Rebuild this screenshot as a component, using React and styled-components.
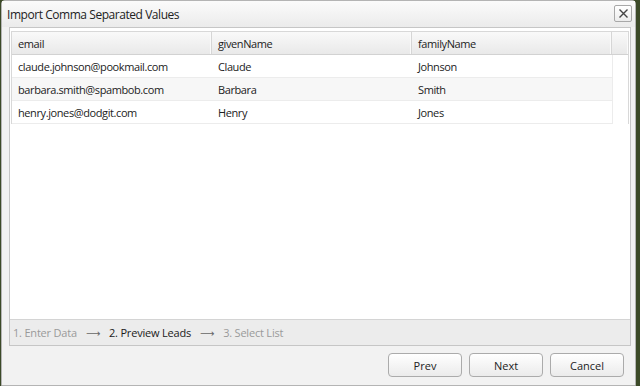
import React from 'react';
import styled, { createGlobalStyle } from 'styled-components';

const GlobalStyle = createGlobalStyle`
  html, body {
    margin: 0;
    padding: 0;
    background: #3c4a28;
    width: 640px;
    height: 386px;
    overflow: hidden;
  }
  * { box-sizing: border-box; }
`;

const Dialog = styled.div`
  margin-left: 1px;
  width: 635px;
  height: 386px;
  border: 1px solid #b4b4b4;
  border-radius: 4px 4px 0 0;
  background: #f2f2f2;
  display: flex;
  flex-direction: column;
  font-family: "Open Sans", "DejaVu Sans", sans-serif;
  color: #222;
`;

const TitleBar = styled.div`
  height: 26px;
  flex: none;
  display: flex;
  align-items: center;
  justify-content: space-between;
  padding: 0 3px 0 5px;
  background: linear-gradient(#fbfbfb, #ebebeb);
  font-size: 12px;
  letter-spacing: -0.45px;
`;

const CloseButton = styled.button`
  width: 18px;
  height: 17px;
  padding: 0;
  margin-top: -1px;
  border: 1px solid #a8a8a8;
  border-radius: 2px;
  background: linear-gradient(#ffffff, #ececec);
  display: flex;
  align-items: center;
  justify-content: center;
`;

const Body = styled.div`
  flex: none;
  height: 319px;
  padding: 0 4px 0 7px;
`;

const Panel = styled.div`
  height: 100%;
  border: 1px solid #c6c6c6;
  background: #ffffff;
  display: flex;
  flex-direction: column;
`;

const GridArea = styled.div`
  flex: 1;
  padding: 3px 1px 0 1px;
  border-bottom: 1px solid #d4d4d4;
`;

const Grid = styled.div`
  border: 1px solid #d8d8d8;
  border-bottom: none;
  font-size: 11px;
  letter-spacing: -0.4px;
`;

const Header = styled.div`
  display: grid;
  grid-template-columns: 200px 200px 200px 1fr;
  height: 23px;
  background: linear-gradient(#f9f9f9, #e9e9e9);
  border-bottom: 1px solid #d2d2d2;
`;

const HeaderCell = styled.div`
  display: flex;
  align-items: center;
  padding-left: 6px;
  border-right: 1px solid #d6d6d6;
  box-shadow: inset -1px 0 0 #fafafa;
  &:last-child { border-right: none; }
`;

const Row = styled.div`
  display: grid;
  grid-template-columns: 200px 200px 200px;
  width: 601px;
  height: 23px;
  background: ${p => (p.$alt ? '#f7f7f7' : '#ffffff')};
  border-bottom: 1px solid #ececec;
  border-right: 1px solid #ececec;
`;

const Cell = styled.div`
  display: flex;
  align-items: center;
  padding-left: 6px;
  white-space: nowrap;
`;

const StepBar = styled.div`
  flex: none;
  height: 25px;
  display: flex;
  align-items: center;
  gap: 9px;
  padding-left: 3px;
  background: #ececec;
  font-size: 11px;
  letter-spacing: -0.2px;
`;

const Step = styled.span`
  color: ${p => (p.$active ? '#1a1a1a' : '#9a9a9a')};
`;

const Arrow = styled.span`
  color: #666;
  font-size: 10px;
`;

const Footer = styled.div`
  flex: 1;
  display: flex;
  justify-content: flex-end;
  align-items: flex-start;
  gap: 7px;
  padding: 7px 11px 0 0;
`;

const Button = styled.button`
  width: 74px;
  height: 24px;
  border: 1px solid #ababab;
  border-radius: 4px;
  background: linear-gradient(#ffffff, #ebebeb);
  font-family: "Open Sans", "DejaVu Sans", sans-serif;
  font-size: 11px;
  color: #222;
  padding: 0;
`;

const rows = [
  ['claude.johnson@pookmail.com', 'Claude', 'Johnson'],
  ['barbara.smith@spambob.com', 'Barbara', 'Smith'],
  ['henry.jones@dodgit.com', 'Henry', 'Jones'],
];

export default function App() {
  return (
    <>
      <GlobalStyle />
      <Dialog>
        <TitleBar>
          <span>Import Comma Separated Values</span>
          <CloseButton aria-label="close">
            <svg width="11" height="11" viewBox="0 0 11 11">
              <path d="M1.5 1.5 L9.5 9.5 M9.5 1.5 L1.5 9.5" stroke="#444" strokeWidth="1.4" />
            </svg>
          </CloseButton>
        </TitleBar>
        <Body>
          <Panel>
            <GridArea>
              <Grid>
                <Header>
                  <HeaderCell>email</HeaderCell>
                  <HeaderCell>givenName</HeaderCell>
                  <HeaderCell>familyName</HeaderCell>
                  <HeaderCell />
                </Header>
                {rows.map((r, i) => (
                  <Row key={r[0]} $alt={i % 2 === 1}>
                    {r.map(v => <Cell key={v}>{v}</Cell>)}
                  </Row>
                ))}
              </Grid>
            </GridArea>
            <StepBar>
              <Step>1. Enter Data</Step>
              <Arrow>⟶</Arrow>
              <Step $active>2. Preview Leads</Step>
              <Arrow>⟶</Arrow>
              <Step>3. Select List</Step>
            </StepBar>
          </Panel>
        </Body>
        <Footer>
          <Button>Prev</Button>
          <Button>Next</Button>
          <Button>Cancel</Button>
        </Footer>
      </Dialog>
    </>
  );
}
